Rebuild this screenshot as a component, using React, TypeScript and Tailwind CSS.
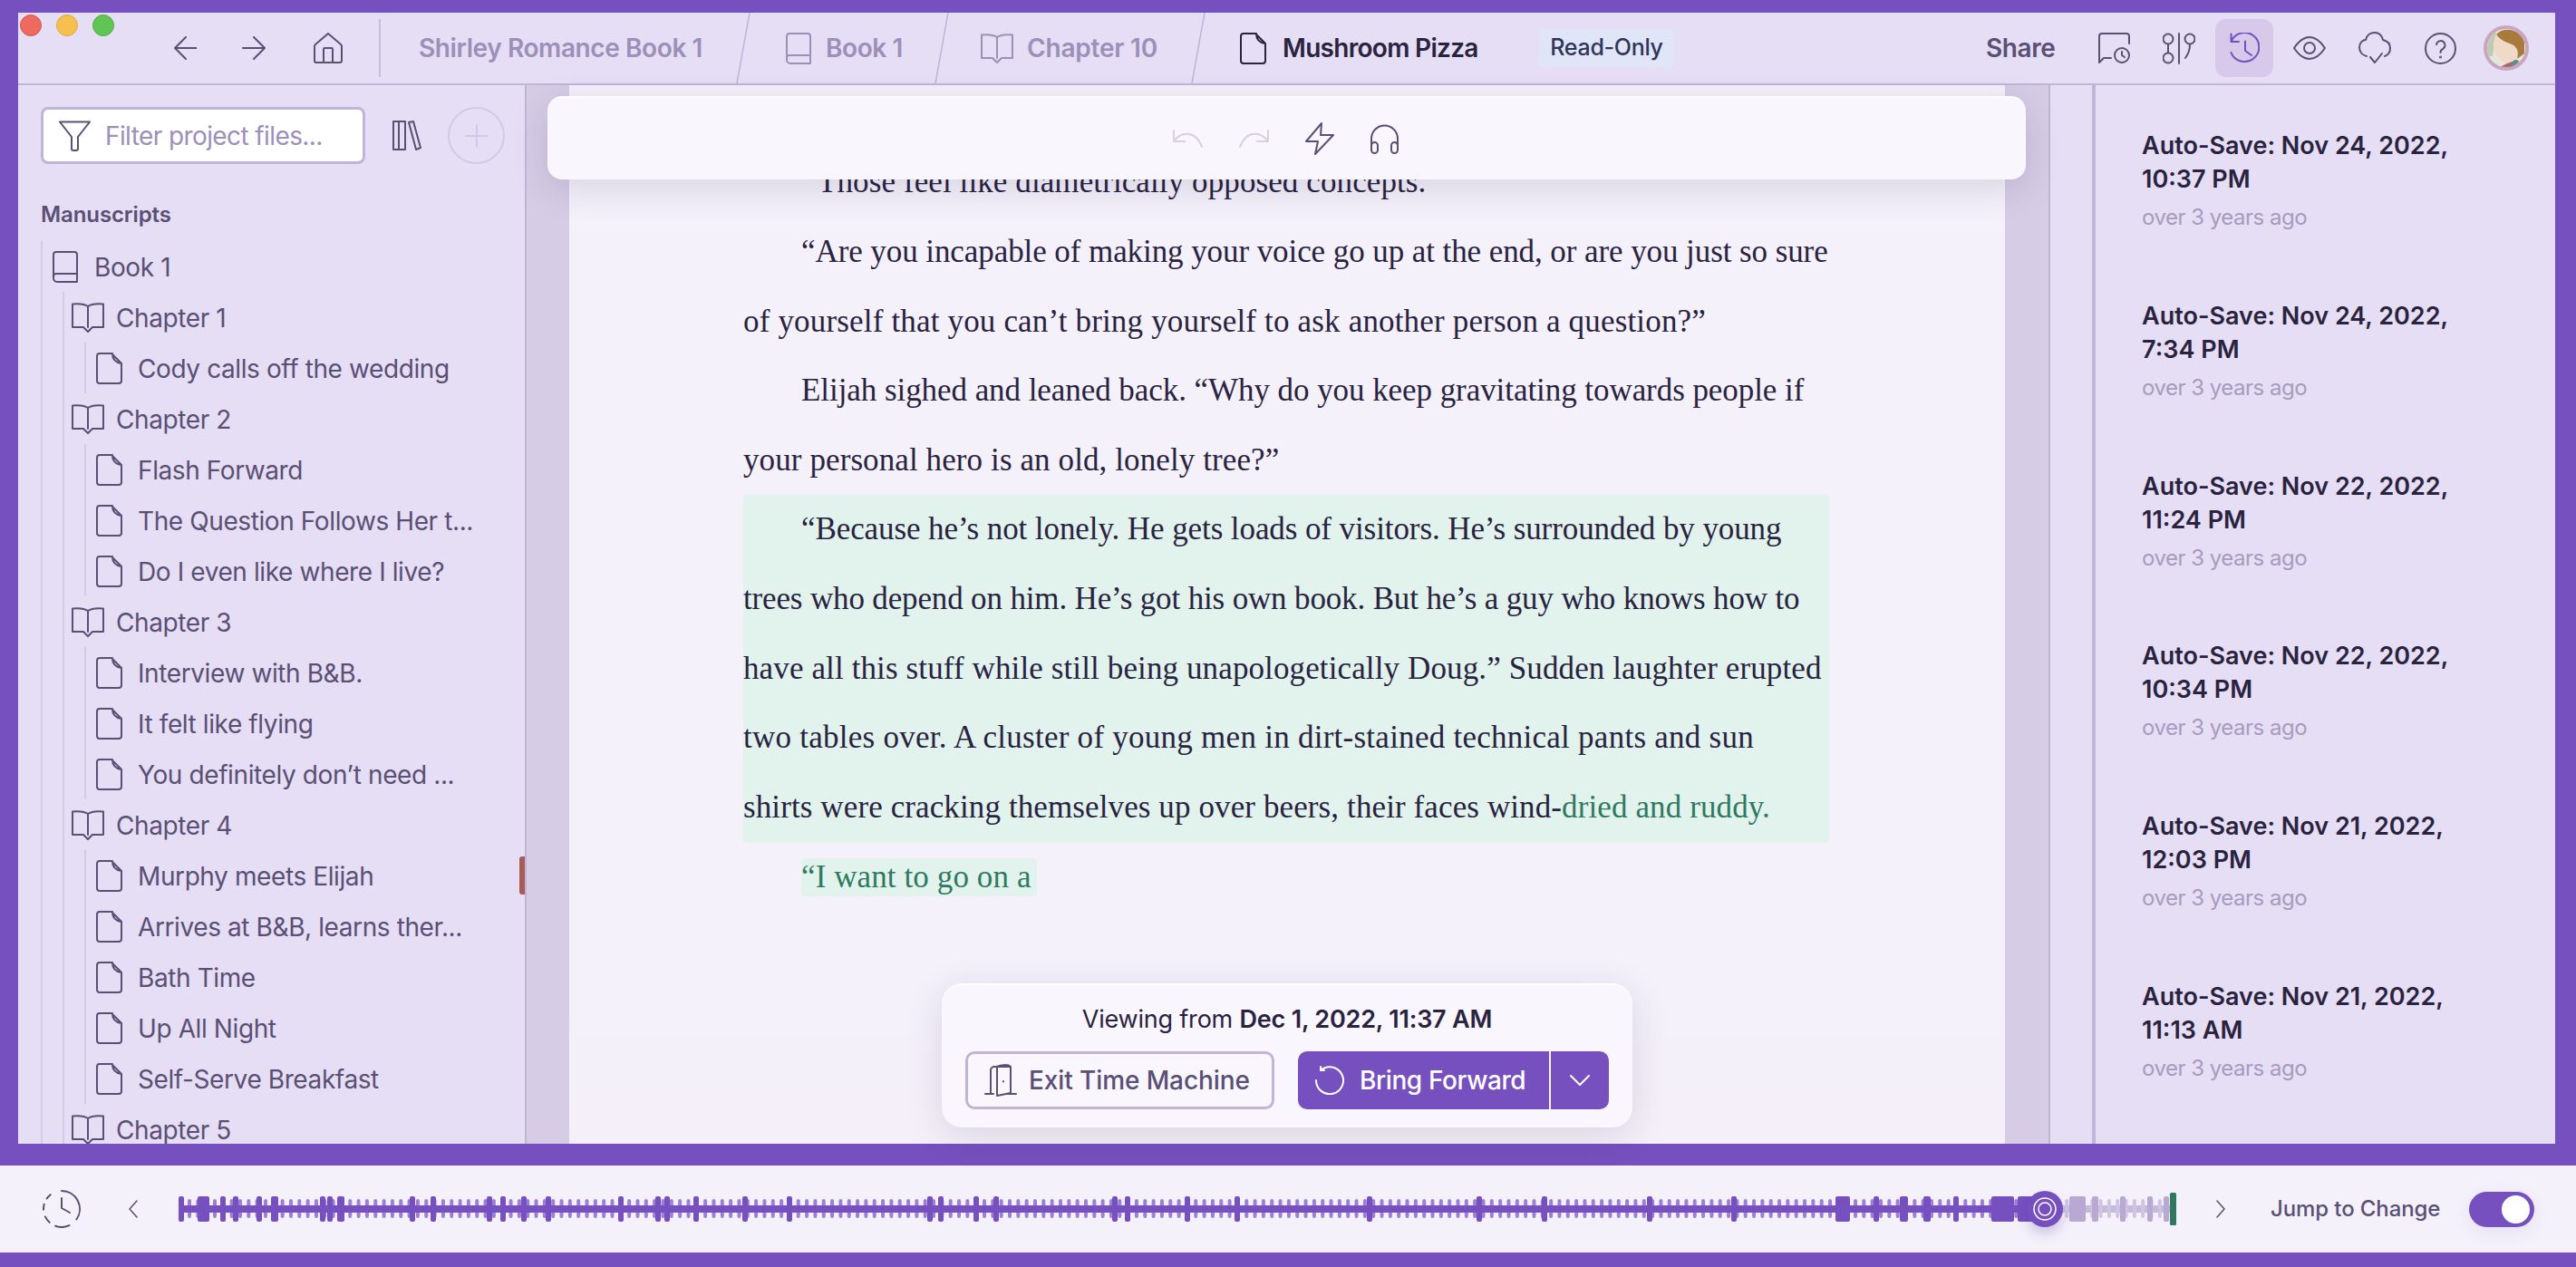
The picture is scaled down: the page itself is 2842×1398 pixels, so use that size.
import type { ReactNode } from "react";

const INK = "#5a4f75";
const PURPLE = "#7650be";

function Icon({ w, h, color = INK, sw = 2, children }: { w: number; h: number; color?: string; sw?: number; children: ReactNode }) {
  return (
    <svg width={w} height={h} viewBox={`0 0 ${w} ${h}`} fill="none" stroke={color} strokeWidth={sw} strokeLinecap="round" strokeLinejoin="round" className="shrink-0">
      {children}
    </svg>
  );
}

const BookIcon = ({ color = INK }: { color?: string }) => (
  <Icon w={28} h={35} color={color}>
    <path d="M1 29V4a3 3 0 0 1 3-3h20a3 3 0 0 1 3 3v30H5a4 4 0 0 1-4-4v-2a3 3 0 0 1 3-3h23" />
  </Icon>
);
const OpenBookIcon = ({ color = INK }: { color?: string }) => (
  <Icon w={36} h={33} color={color}>
    <path d="M18 4C14 1 7 1 1 1.500V27h12l5 5 5-5h12V1.500C29 1 22 1 18 4ZM18 4v23" />
  </Icon>
);
const FileIcon = ({ color = INK }: { color?: string }) => (
  <Icon w={29} h={35} color={color}>
    <path d="M1 4a3 3 0 0 1 3-3h13l11 11v19a3 3 0 0 1-3 3H4a3 3 0 0 1-3-3ZM18 1c0 6 3 10 10 11" />
  </Icon>
);

function arc(a: number, b: number) {
  const p = (d: number) => {
    const r = (d * Math.PI) / 180;
    return `${(21 + 20 * Math.sin(r)).toFixed(2)} ${(21 - 20 * Math.cos(r)).toFixed(2)}`;
  };
  return `M${p(a)}A20 20 0 ${b - a > 180 ? 1 : 0} 1 ${p(b)}`;
}

const TREE = [
  { name: "Chapter 1", files: ["Cody calls off the wedding"] },
  { name: "Chapter 2", files: ["Flash Forward", "The Question Follows Her t...", "Do I even like where I live?"] },
  { name: "Chapter 3", files: ["Interview with B&B.", "It felt like flying", "You definitely don’t need ..."] },
  { name: "Chapter 4", files: ["Murphy meets Elijah", "Arrives at B&B, learns ther...", "Bath Time", "Up All Night", "Self-Serve Breakfast"] },
  { name: "Chapter 5", files: [] as string[] },
];

const SAVES = [
  ["Auto-Save: Nov 24, 2022,", "10:37 PM"],
  ["Auto-Save: Nov 24, 2022,", "7:34 PM"],
  ["Auto-Save: Nov 22, 2022,", "11:24 PM"],
  ["Auto-Save: Nov 22, 2022,", "10:34 PM"],
  ["Auto-Save: Nov 21, 2022,", "12:03 PM"],
  ["Auto-Save: Nov 21, 2022,", "11:13 AM"],
];

const BIG: [number, number][] = [
  [197, 6], [218, 13], [243, 6], [257, 6], [283, 6], [299, 8], [353, 6], [361, 6], [372, 8], [452, 6], [475, 6],
  [537, 6], [552, 6], [575, 6], [602, 6], [682, 6], [723, 6], [733, 6], [765, 6], [819, 6], [868, 6], [1023, 6],
  [1035, 6], [1074, 6], [1096, 6], [1227, 6], [1241, 6], [1307, 6], [1362, 6], [1508, 6], [1629, 6], [1701, 6],
  [1817, 6], [1910, 6], [2025, 16], [2067, 6], [2096, 9], [2122, 8], [2155, 6], [2197, 25], [2226, 24],
];
const FADED: [number, number][] = [[2283, 18], [2308, 7], [2339, 6], [2369, 6], [2387, 6]];

function Timeline() {
  const small: number[] = [];
  for (let x = 207; x < 2390; x += 9.33) small.push(x);
  return (
    <svg width={2204} height={60} viewBox="197 1304 2204 60" className="shrink-0 overflow-visible">
      <rect x={2256} y={1330} width={138} height={8} fill="#c5b9dc" />
      {small.filter((x) => x > 2260).map((x) => (
        <rect key={x} x={x} y={1323} width={4} height={21} rx={2} fill="#cfc5e2" />
      ))}
      {FADED.map(([x, w]) => (
        <rect key={x} x={x} y={1320} width={w} height={28} rx={2} fill="#b9a9d2" />
      ))}
      {small.filter((x) => x <= 2260).map((x) => (
        <rect key={x} x={x} y={1323} width={4} height={21} rx={2} fill="#9d80d6" />
      ))}
      <rect x={197} y={1330} width={2060} height={8} fill={PURPLE} />
      {BIG.map(([x, w]) => (
        <rect key={x} x={x} y={1320} width={w} height={28} rx={2} fill={PURPLE} />
      ))}
      <rect x={2394} y={1316} width={7} height={36} rx={1.500} fill="#2f7a5f" />
      <g className="drop-shadow-[0_8px_6px_rgba(60,40,110,0.18)]">
        <circle cx={2256} cy={1334} r={20} fill={PURPLE} />
        <circle cx={2256} cy={1334} r={12} fill="none" stroke="#fff" strokeWidth={1.500} />
        <circle cx={2256} cy={1334} r={7} fill="none" stroke="#fff" strokeWidth={1.500} />
      </g>
    </svg>
  );
}

function Sidebar() {
  return (
    <aside className="w-[561px] shrink-0 border-r-2 border-[#c0b4d8] bg-[#e6def4] overflow-hidden">
      <div className="flex items-center pl-[25px] pt-[24px]">
        <div className="w-[358px] h-[63px] rounded-[8px] border-[3px] border-[#c0b4d8] bg-white flex items-center pl-[17px]">
          <Icon w={35} h={34}>
            <path d="M1 1.500h33L21 18v13a2 2 0 0 1-2 2h-3a2 2 0 0 1-2-2V18Z" />
          </Icon>
          <span className="ml-[16px] text-[28px] tracking-[-0.6px] text-[#9c8fb9]">Filter project files...</span>
        </div>
        <div className="ml-[30px]">
          <Icon w={32} h={33}>
            <path d="M1 1h6v31H1ZM7 1h7v31H7ZM18 2l5-1 8 29-5 2Z" />
          </Icon>
        </div>
        <div className="ml-[29px] w-[63px] h-[63px] rounded-full border-2 border-[#d3c9e6] flex items-center justify-center">
          <Icon w={26} h={26} color="#d3c9e6">
            <path d="M13 1v24M1 13h24" />
          </Icon>
        </div>
      </div>
      <div className="pl-[25px] mt-[38px] h-[47px] text-[24px] font-semibold leading-[36px] text-[#5a4f75] tracking-[-0.1px]">Manuscripts</div>
      <div className="ml-[25px] border-l-2 border-[#d3cae6] text-[28px] tracking-[-0.4px] text-[#5a4f75]">
        <div className="h-[56px] flex items-center pl-[11px]">
          <BookIcon />
          <span className="ml-[18px] pt-[2px]">Book 1</span>
        </div>
        <div className="ml-[22px] border-l-2 border-[#d3cae6]">
          {TREE.map((ch) => (
            <div key={ch.name}>
              <div className="h-[56px] flex items-center pl-[8px]">
                <OpenBookIcon />
                <span className="ml-[13px] pt-[2px]">{ch.name}</span>
              </div>
              {ch.files.length > 0 && (
                <div className="ml-[22px] border-l-2 border-[#d3cae6]">
                  {ch.files.map((f) => (
                    <div key={f} className="h-[56px] flex items-center pl-[11px] whitespace-nowrap">
                      <FileIcon />
                      <span className="ml-[17px] pt-[2px]">{f}</span>
                    </div>
                  ))}
                </div>
              )}
            </div>
          ))}
        </div>
      </div>
    </aside>
  );
}

function TitleBar() {
  const tab = "text-[28px] font-semibold tracking-[-0.4px] whitespace-nowrap";
  const Slant = () => (
    <svg width={16} height={78} viewBox="0 0 16 78" className="shrink-0 self-start">
      <line x1={15} y1={0} x2={1} y2={78} stroke="#c0b4d8" strokeWidth={1.500} />
    </svg>
  );
  return (
    <header className="h-[80px] shrink-0 border-b-2 border-[#c0b4d8] bg-[#e6def4] flex items-center">
      <div className="self-start pt-[2px] pl-[2px] flex gap-[16px]">
        <span className="w-[24px] h-[24px] rounded-full bg-[#ee6a5f] border border-[#d5554b]" />
        <span className="w-[24px] h-[24px] rounded-full bg-[#f5c04f] border border-[#dfa93c]" />
        <span className="w-[24px] h-[24px] rounded-full bg-[#61c554] border border-[#4fae45]" />
      </div>
      <div className="ml-[66px]">
        <Icon w={25} h={26}>
          <path d="M24.500 13H1M13 1 1 13l12 12" />
        </Icon>
      </div>
      <div className="ml-[50px]">
        <Icon w={26} h={26}>
          <path d="M1 13h24M13 1l12 12-12 12" />
        </Icon>
      </div>
      <div className="ml-[53px]">
        <Icon w={32} h={34}>
          <path d="M1 15a3 3 0 0 1 1-2L16 1l14 12a3 3 0 0 1 1 2v16a2 2 0 0 1-2 2H3a2 2 0 0 1-2-2ZM11 33V18a1 1 0 0 1 1-1h8a1 1 0 0 1 1 1v15" />
        </Icon>
      </div>
      <div className="ml-[40px] w-[2px] h-[64px] bg-[#c9bee0]" />
      <div className={`ml-[42px] w-[350px] text-[#9c8fb9] ${tab}`}>Shirley Romance Book 1</div>
      <Slant />
      <div className={`w-[203px] pl-[39px] flex items-center text-[#9c8fb9] ${tab}`}>
        <BookIcon color="#9c8fb9" />
        <span className="ml-[16px]">Book 1</span>
      </div>
      <Slant />
      <div className={`w-[267px] pl-[35px] flex items-center text-[#9c8fb9] ${tab}`}>
        <OpenBookIcon color="#9c8fb9" />
        <span className="ml-[15px] tracking-[-0.2px]">Chapter 10</span>
      </div>
      <Slant />
      <div className={`w-[368px] pl-[38px] flex items-center text-[#2a2340] ${tab}`}>
        <FileIcon color="#2a2340" />
        <span className="ml-[18px] tracking-[-0.7px]">Mushroom Pizza</span>
      </div>
      <div className="w-[149px] h-[42px] rounded-[6px] bg-[#e0e6f8] flex items-center justify-center text-[25px] font-medium tracking-[-0.3px] text-[#2f3558]">Read-Only</div>
      <div className="ml-[344px] w-[76px] text-[28px] font-semibold tracking-[-0.4px] text-[#5a4f75]">Share</div>
      <div className="ml-[48px]">
        <Icon w={35} h={35}>
          <path d="M14 28H6l-5 5V4a3 3 0 0 1 3-3h27a3 3 0 0 1 3 3v8" />
          <circle cx={26} cy={25} r={8} />
          <path d="M26 21v4l3 2" />
        </Icon>
      </div>
      <div className="ml-[36px]">
        <Icon w={36} h={35}>
          <circle cx={6} cy={7} r={5.500} />
          <circle cx={6} cy={28} r={5.500} />
          <path d="M6 13v9M18 1v33M30 13c0 6-2 11-5 15" />
          <circle cx={30} cy={7} r={5.500} />
        </Icon>
      </div>
      <div className="ml-[22px] w-[64px] h-[64px] rounded-[12px] bg-[#d7c9ea] flex items-center justify-center">
        <Icon w={33} h={35} color={PURPLE}>
          <path d="M1.500 1.500V10H10M1.500 10A16 16 0 1 1 1.500 22M17 9.500V20l7 5" />
        </Icon>
      </div>
      <div className="ml-[22px]">
        <Icon w={36} h={26}>
          <path d="M1 13C7 4 12 1 18 1s11 3 17 12c-6 9-11 12-17 12S7 22 1 13Z" />
          <circle cx={18} cy={13} r={6} />
        </Icon>
      </div>
      <div className="ml-[36px]">
        <Icon w={36} h={36}>
          <path d="M9 27c-5-1-8-5-8-10 0-5 4-8 7-8 1-5 5-8 10-8 5 0 8 4 9 8 4 1 8 4 8 9 0 5-3 8-6 9M13 28l5 6 8-10" />
        </Icon>
      </div>
      <div className="ml-[37px]">
        <Icon w={35} h={35}>
          <ellipse cx={17.500} cy={17.500} rx={16.500} ry={16.500} />
          <path d="M13 13a4.800 4.800 0 1 1 7 5c-2 1-2.500 2-2.500 4" />
          <circle cx={17.500} cy={27} r={0.600} />
        </Icon>
      </div>
      <div className="ml-[30px] w-[50px] h-[50px] rounded-full border-[4px] border-[#c9a6c0] overflow-hidden shrink-0">
        <svg width={42} height={42} viewBox="0 0 42 42">
          <rect width={42} height={42} fill="#e4e6dc" />
          <path d="M0 4h10L6 30H0Z" fill="#bfcbb0" />
          <path d="M10 6C18-3 36 0 41 13v14l-8 6c2-8 0-12-4-15C24 15 16 15 10 6Z" fill="#a87a3c" />
          <path d="M10 6c5 8 14 9 19 12 4 4 5 10 2 15l-10 5c-7-3-13-10-14-19 0-5 1-10 3-13Z" fill="#f0d9c6" />
          <path d="M14 42l8-4 11-4 6 8Z" fill="#b4636b" />
          <path d="M24 42l6-8 5 1-5 7Z" fill="#5d8f8a" />
        </svg>
      </div>
    </header>
  );
}

function Manuscript() {
  const line = "h-[76.800px] leading-[76.800px] whitespace-nowrap";
  return (
    <main className="w-[1584px] shrink-0 bg-gradient-to-b from-[#f4f1fb] from-85% to-[#f4eff8] pt-[69px] font-['Liberation_Serif',serif] text-[35px] text-[#29233f] overflow-hidden">
      <div className="pl-[192px]">
        <div className={`${line} pl-[82px] tracking-[0.1px]`}>Those feel like diametrically opposed concepts.</div>
        <div className={`${line} pl-[64px] tracking-[-0.08px]`}>“Are you incapable of making your voice go up at the end, or are you just so sure</div>
        <div className={`${line} tracking-[0.17px]`}>of yourself that you can’t bring yourself to ask another person a question?”</div>
        <div className={`${line} pl-[64px] tracking-[-0.06px]`}>Elijah sighed and leaned back. “Why do you keep gravitating towards people if</div>
        <div className={`${line} tracking-[0.1px]`}>your personal hero is an old, lonely tree?”</div>
        <div className="w-[1198px] -mt-px rounded-[4px] bg-[#e2f3ee]">
          <div className={`${line} pl-[64px] tracking-[-0.09px]`}>“Because he’s not lonely. He gets loads of visitors. He’s surrounded by young</div>
          <div className={`${line} tracking-[-0.15px]`}>trees who depend on him. He’s got his own book. But he’s a guy who knows how to</div>
          <div className={`${line} tracking-[0.12px]`}>have all this stuff while still being unapologetically Doug.” Sudden laughter erupted</div>
          <div className={`${line} tracking-[0.26px]`}>two tables over. A cluster of young men in dirt-stained technical pants and sun</div>
          <div className={`${line} tracking-[0.11px]`}>
            shirts were cracking themselves up over beers, their faces wind-<span className="text-[#2f7a5f]">dried and ruddy.</span>
          </div>
        </div>
        <div className={`${line} pl-[64px] tracking-[0.1px]`}>
          <span className="inline-block h-[42px] leading-[42px] w-[260px] rounded-[4px] bg-[#e2f3ee] text-[#2f7a5f]">“I want to go on a</span>
        </div>
      </div>
    </main>
  );
}

export default function App() {
  return (
    <div className="w-[2842px] h-[1398px] overflow-hidden bg-[#7650be] font-['Inter',sans-serif]">
      <div className="h-[1262px] pt-[14px] pl-[20px] pr-[23px] flex flex-col">
        <TitleBar />
        <div className="relative flex-1 flex min-h-0">
          <Sidebar />
          <div className="w-[47px] shrink-0 bg-[#d6cce6]" />
          <Manuscript />
          <div className="w-[48px] shrink-0 bg-[#d6cce6]" />
          <div className="w-[48px] shrink-0 border-l-2 border-[#c0b4d8] bg-[#e6def4]" />
          <section className="w-[511px] shrink-0 border-l-4 border-[#c0b4d8] bg-[#e6def4] pl-[51px] pt-[48px] overflow-hidden">
            {SAVES.map(([a, b], i) => (
              <div key={i} className="h-[187.800px]">
                <div className="text-[27px] leading-[37px] font-semibold tracking-[0px] text-[#2a2340]">
                  {a}
                  <br />
                  {b}
                </div>
                <div className="mt-[7px] text-[24px] leading-[34px] tracking-[-0.5px] text-[#a79bc0]">over 3 years ago</div>
              </div>
            ))}
          </section>

          <div className="absolute left-[584px] top-[12px] w-[1631px] h-[92px] rounded-[16px] border-t-2 border-[#fdfcff] bg-[#f9f6fd] shadow-[0_10px_40px_rgba(40,30,70,0.14)] flex items-center justify-center">
            <div className="flex items-center pr-[1px]">
              <Icon w={33} h={20} color="#d6cfe6">
                <path d="M1 1v12h12M1 13C8 3 24-1 32 19" />
              </Icon>
              <div className="ml-[40px]">
                <Icon w={33} h={20} color="#d6cfe6">
                  <path d="M32 1v12H20M32 13C25 3 9-1 1 19" />
                </Icon>
              </div>
              <div className="ml-[39px]">
                <Icon w={33} h={36}>
                  <path d="M19 1 2 21h13l-3 14 20-21H18Z" />
                </Icon>
              </div>
              <div className="ml-[39px]">
                <Icon w={33} h={33}>
                  <path d="M2 26V16a14.500 14.500 0 0 1 29 0v10" />
                  <rect x={2} y={20} width={7} height={12} rx={3.500} />
                  <rect x={24} y={20} width={7} height={12} rx={3.500} />
                </Icon>
              </div>
            </div>
          </div>

          <div className="absolute left-[1019px] top-[991px] w-[762px] h-[159px] rounded-[22px] border-t-2 border-[#fdfcff] bg-[#f9f6fd] shadow-[0_8px_40px_rgba(40,30,70,0.13)] flex flex-col items-center pt-[20px]">
            <div className="text-[27px] leading-[36px] tracking-[-0.2px] text-[#2a2340]">
              Viewing from <span className="font-semibold">Dec 1, 2022, 11:37 AM</span>
            </div>
            <div className="mt-[17px] flex items-center">
              <button className="w-[341px] h-[64px] rounded-[10px] border-[3px] border-[#c0b4d8] flex items-center pl-[18px] text-[28px] font-medium tracking-[-0.1px] text-[#5a4f75]">
                <Icon w={36} h={36}>
                  <path d="M1 33h9M25 33h10M7 33V7a4 4 0 0 1 4-4h17a1 1 0 0 1 1 1v29M14 3c4-2 12-3 15 0M14 4v31l15-3M21 19v0.500" />
                </Icon>
                <span className="ml-[13px]">Exit Time Machine</span>
              </button>
              <button className="ml-[26px] w-[277px] h-[64px] rounded-l-[10px] bg-[#7650be] flex items-center pl-[19px] text-[28px] font-medium tracking-[-0.4px] text-white">
                <Icon w={32} h={32} color="#fff">
                  <path d="M6 5a15 15 0 1 1-5 11M6 5v-4M6 5h4" />
                </Icon>
                <span className="ml-[17px]">Bring Forward</span>
              </button>
              <div className="ml-[2px] w-[64px] h-[64px] rounded-r-[10px] bg-[#7650be] flex items-center justify-center">
                <Icon w={22} h={12} color="#fff">
                  <path d="M1 1l10 10L21 1" />
                </Icon>
              </div>
            </div>
          </div>

          <div className="absolute left-[553px] top-[851px] w-[6px] h-[42px] rounded-l-[3px] bg-[#a85a55]" />
        </div>
      </div>

      <div className="mt-[24px] h-[96px] bg-[#f4f1fb] flex items-center pl-[47px]">
        <Icon w={42} h={42}>
          <path d={`${arc(0, 125)}${arc(155, 200)}${arc(222, 245)}${arc(268, 285)}${arc(305, 322)}`} />
          <path d="M21 9v11l9 5" />
        </Icon>
        <div className="ml-[53px]">
          <Icon w={10} h={20} sw={1.500}>
            <path d="M9 1 1 10l8 9" />
          </Icon>
        </div>
        <div className="ml-[45px]">
          <Timeline />
        </div>
        <div className="ml-[44px]">
          <Icon w={10} h={20} sw={1.500}>
            <path d="m1 1 8 9-8 9" />
          </Icon>
        </div>
        <div className="ml-[50px] w-[188px] text-[24px] font-medium tracking-[-0.1px] whitespace-nowrap text-[#5a4f75]">Jump to Change</div>
        <div className="ml-[31px] w-[72px] h-[39px] rounded-full bg-[#7650be] shadow-[0_6px_20px_rgba(60,40,110,0.08)] flex items-center justify-end pr-[5px]">
          <span className="w-[31px] h-[31px] rounded-full bg-white" />
        </div>
      </div>
    </div>
  );
}
